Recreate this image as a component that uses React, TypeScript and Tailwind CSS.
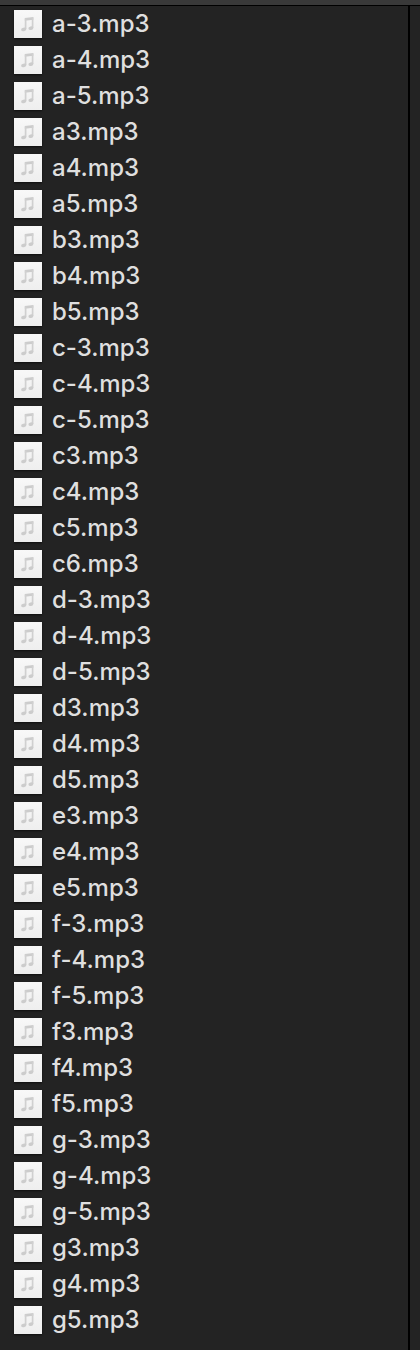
const files: string[] = [
  "a-3", "a-4", "a-5", "a3", "a4", "a5", "b3", "b4", "b5",
  "c-3", "c-4", "c-5", "c3", "c4", "c5", "c6",
  "d-3", "d-4", "d-5", "d3", "d4", "d5", "e3", "e4", "e5",
  "f-3", "f-4", "f-5", "f3", "f4", "f5",
  "g-3", "g-4", "g-5", "g3", "g4", "g5",
];

function MusicFileIcon() {
  return (
    <span className="block h-7 w-7 shrink-0 bg-gradient-to-b from-[#f8f8f8] to-[#eeeeee] shadow-[0_1px_2px_rgba(0,0,0,0.6)]">
      <svg viewBox="0 0 28 28" className="block h-7 w-7" fill="none">
        <path d="M10.8 8.1 19.4 7V9.7L10.8 10.8Z" fill="#cccccc" />
        <path d="M11.6 8.5V19.2M18.6 7.5V18" stroke="#d0d0d0" strokeWidth="1.7" />
        <ellipse cx="9.7" cy="19.4" rx="2.6" ry="1.8" transform="rotate(-12 9.7 19.4)" fill="#cccccc" />
        <ellipse cx="16.9" cy="18.2" rx="2.5" ry="1.8" transform="rotate(-12 16.9 18.2)" fill="#cccccc" />
      </svg>
    </span>
  );
}

function FileRow({ name }: { name: string }) {
  return (
    <li className="flex h-9 items-center gap-[10px] pl-3.5">
      <MusicFileIcon />
      <span className="whitespace-nowrap text-2xl leading-9 font-medium text-[#dfdfdf]">{name}.mp3</span>
    </li>
  );
}

export default function App() {
  return (
    <div className="flex h-[1350px] w-[420px] flex-col overflow-hidden bg-[#232323] font-['Inter',sans-serif]">
      <header className="h-[6px] shrink-0 border-b border-black bg-[#393939]" />
      <main className="flex min-h-0 flex-1">
        <ul className="w-[410px] border-r-2 border-black">
          {files.map((name) => (
            <FileRow key={name} name={name} />
          ))}
        </ul>
        <div className="flex-1" />
      </main>
    </div>
  );
}
